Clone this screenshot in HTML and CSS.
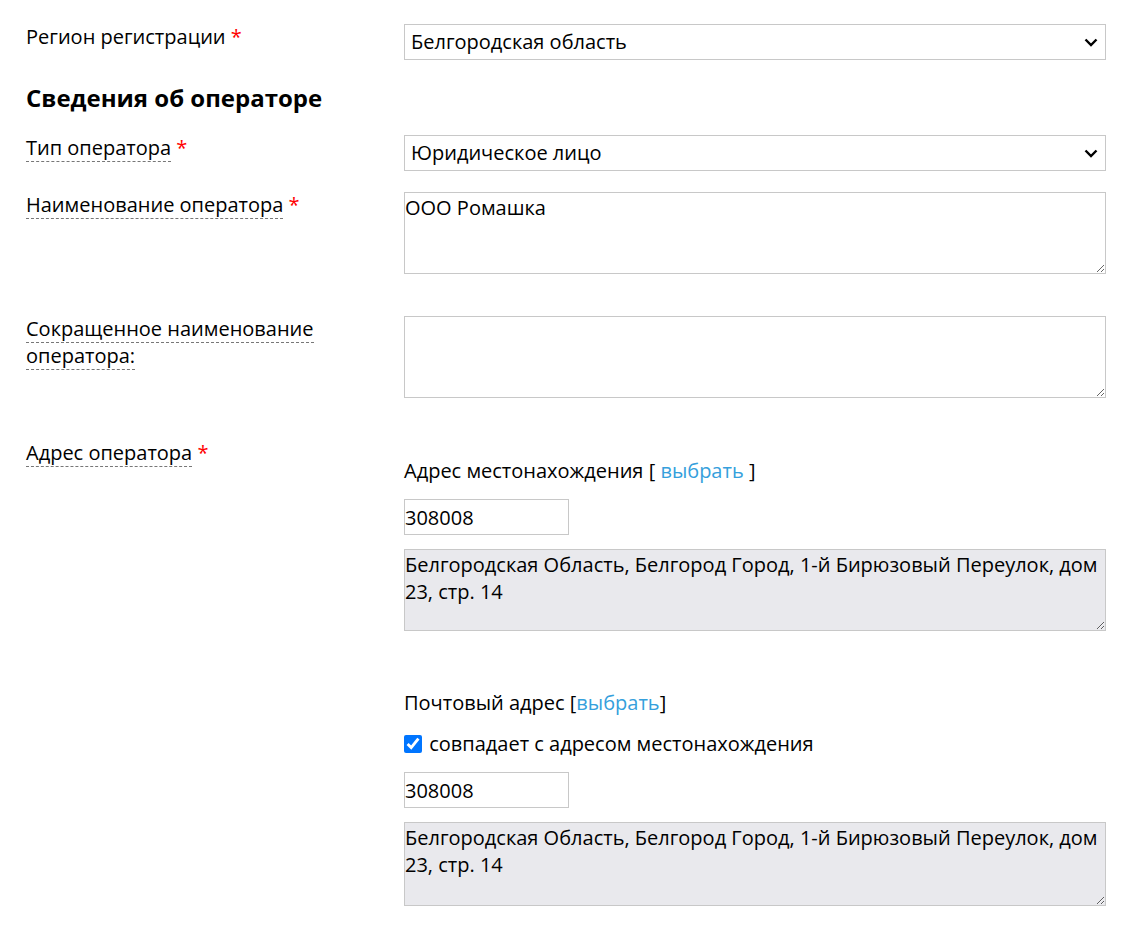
FILE: index.html
```html
<!DOCTYPE html>
<html lang="ru">
<head>
<meta charset="utf-8">
<title>Сведения об операторе</title>
<link rel="stylesheet" href="styles.css">
</head>
<body>
<div class="form">
  <div class="row">
    <div class="label"><span class="plain">Регион регистрации</span> <span class="req">*</span></div>
    <div class="field">
      <div class="select"><span>Белгородская область</span><svg class="chev" width="14" height="9" viewBox="0 0 14 9"><path d="M1.5 1.5 L7 7 L12.5 1.5" fill="none" stroke="#000" stroke-width="2.4"/></svg></div>
    </div>
  </div>

  <h2 class="section">Сведения об операторе</h2>

  <div class="row">
    <div class="label"><span class="dash">Тип оператора</span> <span class="req">*</span></div>
    <div class="field">
      <div class="select"><span>Юридическое лицо</span><svg class="chev" width="14" height="9" viewBox="0 0 14 9"><path d="M1.5 1.5 L7 7 L12.5 1.5" fill="none" stroke="#000" stroke-width="2.4"/></svg></div>
    </div>
  </div>

  <div class="row">
    <div class="label"><span class="dash">Наименование оператора</span> <span class="req">*</span></div>
    <div class="field">
      <textarea class="ta">ООО Ромашка</textarea>
    </div>
  </div>

  <div class="row">
    <div class="label"><span class="dash">Сокращенное наименование оператора:</span></div>
    <div class="field">
      <textarea class="ta"></textarea>
    </div>
  </div>

  <div class="row">
    <div class="label"><span class="dash">Адрес оператора</span> <span class="req">*</span></div>
    <div class="field addr">
      <div class="sub">
        <div class="line">Адрес местонахождения [ <a href="#" class="link">выбрать</a> ]</div>
        <input class="zip" type="text" value="308008">
        <textarea class="ta gray" readonly>Белгородская Область, Белгород Город, 1-й Бирюзовый Переулок, дом 23, стр. 14</textarea>
      </div>
      <div class="sub post">
        <div class="line">Почтовый адрес [<a href="#" class="link">выбрать</a>]</div>
        <label class="line check"><input type="checkbox" checked class="cb"> совпадает с адресом местонахождения</label>
        <input class="zip" type="text" value="308008">
        <textarea class="ta gray tall" readonly>Белгородская Область, Белгород Город, 1-й Бирюзовый Переулок, дом 23, стр. 14</textarea>
      </div>
    </div>
  </div>
</div>
</body>
</html>
```

FILE: styles.css
```css
html, body {
  margin: 0;
  padding: 0;
  background: #fff;
}
body {
  font-family: "Open Sans", "Liberation Sans", sans-serif;
  font-size: 20px;
  line-height: 27px;
  color: #000;
}
.form {
  padding: 24px 0 0 26px;
}
.row {
  display: grid;
  grid-template-columns: 378px 702px;
  margin-bottom: 21px;
}
.label {
  margin-top: -1.5px;
  padding-right: 40px;
}
.dash {
  border-bottom: 1px dashed #777;
}
.req {
  color: #f00;
}
.section {
  font-size: 24px;
  font-weight: 700;
  line-height: 30px;
  margin: 23px 0 22px 0;
}
.select {
  box-sizing: border-box;
  height: 36px;
  border: 1px solid #c8c8c8;
  display: flex;
  align-items: center;
  justify-content: space-between;
  padding: 0 7px 0 6px;
  background: #fff;
}
.select span {
  line-height: 27px;
  margin-top: -1px;
}
.chev {
  display: block;
}
.ta {
  display: block;
  box-sizing: border-box;
  width: 702px;
  height: 82px;
  margin: 0 0 21px 0;
  border: 1px solid #c8c8c8;
  padding: 1px 1px 1px 0;
  font-family: "Open Sans", "Liberation Sans", sans-serif;
  font-size: 20px;
  line-height: 27px;
  color: #000;
  background: #fff;
  resize: vertical;
  border-radius: 0;
  outline: none;
}
.ta.gray {
  background: #e9e9ed;
  margin-bottom: 0;
}
.ta.tall {
  height: 84px;
}
.addr {
  padding-top: 17px;
}
.sub .line {
  display: block;
}
.post {
  margin-top: 58px;
}
.link {
  color: #35a0dc;
  text-decoration: none;
}
.zip {
  display: block;
  box-sizing: border-box;
  width: 165px;
  height: 36px;
  margin: 15px 0 14px 0;
  border: 1px solid #c8c8c8;
  padding: 0 0;
  font-family: "Open Sans", "Liberation Sans", sans-serif;
  font-size: 20px;
  color: #000;
  border-radius: 0;
  outline: none;
}
.check {
  margin-top: 14px;
}
.check + .zip {
  margin-top: 15px;
}
.cb {
  width: 18px;
  height: 18px;
  margin: 0 2px 0 0;
  vertical-align: -2px;
}
```
